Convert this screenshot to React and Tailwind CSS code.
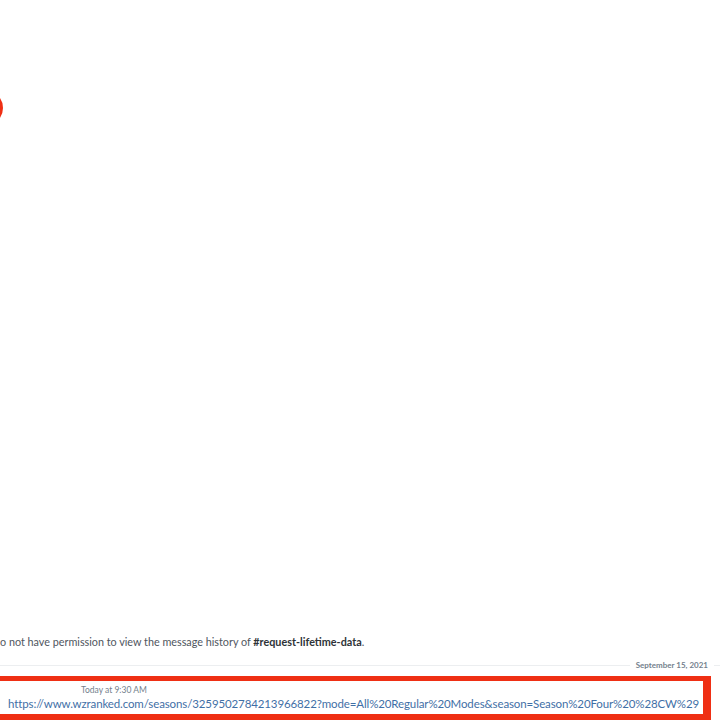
import React from "react";

const url =
    "https://www.wzranked.com/seasons/3259502784213966822?mode=All%20Regular%20Modes&season=Season%20Four%20%28CW%29";

const App = () => {
    return (
        <div className="relative h-[720px] w-[720px] overflow-hidden bg-white flex flex-col justify-end font-['Lato','Open_Sans',sans-serif]">
            {/* red annotation circle, mostly off the left edge */}
            <svg className="absolute left-[-41px] top-[86px]" width="46" height="44" viewBox="0 0 46 44">
                <ellipse cx="23" cy="22" rx="19" ry="17" fill="none" stroke="#ef2f14" strokeWidth="4"/>
            </svg>

            <p className="text-[10.8px] leading-[14px] text-[#4f5660] whitespace-nowrap">
                o not have permission to view the message history of{" "}
                <span className="font-bold text-[#2e3338]">#request-lifetime-data</span>.
            </p>

            <div className="mt-[10px] flex items-center">
                <div className="flex-1 h-px bg-[#eceef0]"/>
                <span className="px-[6px] text-[8px] leading-3 font-bold text-[#747f8d]">September 15, 2021</span>
                <div className="w-[6px] h-px bg-[#eceef0]"/>
            </div>

            <div className="mt-[5px] w-[711px] h-[44px] border-t-[5px] border-r-[8px] border-b-[6px] border-[#ef2f14] flex flex-col">
                <span className="pl-[81px] pt-[3px] text-[8.5px] leading-3 text-[#747f8d]">Today at 9:30 AM</span>
                <a className="pl-[8px] text-[11.5px] tracking-[-0.12px] leading-4 text-[#3f6fa6] whitespace-nowrap">{url}</a>
            </div>
        </div>
    );
};

export default App;
